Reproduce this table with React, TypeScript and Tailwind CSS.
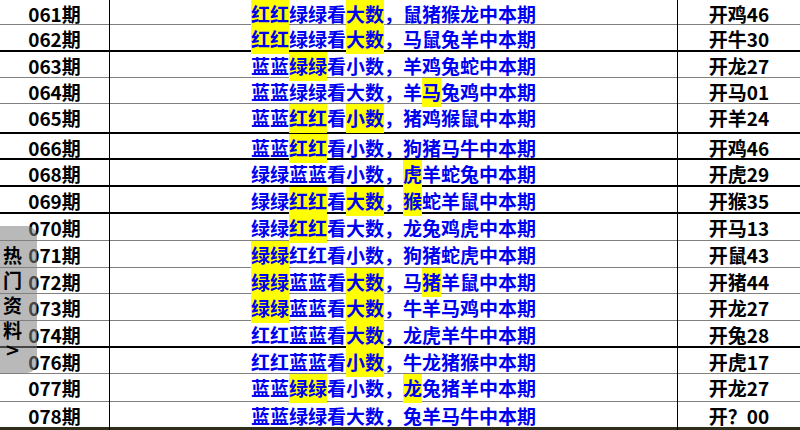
import { Fragment } from 'react'

type Row = { no: string; text: string; result: string; h: string; line: 'gray' | 'black' | 'none' }

// [..] marks the yellow highlighted parts
const ROWS: Row[] = [
  { no: '061期', text: '[红红]绿绿看[大数]，鼠猪猴龙中本期', result: '开鸡46', h: 'h-[25px]', line: 'gray' },
  { no: '062期', text: '[红红]绿绿看[大数]，马鼠兔羊中本期', result: '开牛30', h: 'h-[27px]', line: 'black' },
  { no: '063期', text: '蓝蓝[绿绿]看小数，羊鸡兔蛇中本期', result: '开龙27', h: 'h-[26px]', line: 'gray' },
  { no: '064期', text: '蓝蓝绿绿看大数，羊[马]兔鸡中本期', result: '开马01', h: 'h-[26px]', line: 'gray' },
  { no: '065期', text: '蓝蓝[红红]看[小数]，猪鸡猴鼠中本期', result: '开羊24', h: 'h-[30px]', line: 'black' },
  { no: '066期', text: '蓝蓝[红红]看小数，狗猪马牛中本期', result: '开鸡46', h: 'h-[26px]', line: 'black' },
  { no: '068期', text: '绿绿蓝蓝看小数，[虎]羊蛇兔中本期', result: '开虎29', h: 'h-[27px]', line: 'black' },
  { no: '069期', text: '绿绿[红红]看[大数]，[猴]蛇羊鼠中本期', result: '开猴35', h: 'h-[27px]', line: 'black' },
  { no: '070期', text: '绿绿[红红]看大数，龙兔鸡虎中本期', result: '开马13', h: 'h-[27px]', line: 'gray' },
  { no: '071期', text: '[绿绿]红红看小数，狗猪蛇虎中本期', result: '开鼠43', h: 'h-[27px]', line: 'gray' },
  { no: '072期', text: '[绿绿]蓝蓝看[大数]，马[猪]羊鼠中本期', result: '开猪44', h: 'h-[26px]', line: 'gray' },
  { no: '073期', text: '[绿绿]蓝蓝看[大数]，牛羊马鸡中本期', result: '开龙27', h: 'h-[27px]', line: 'gray' },
  { no: '074期', text: '红红蓝蓝看[大数]，龙虎羊牛中本期', result: '开兔28', h: 'h-[27px]', line: 'black' },
  { no: '076期', text: '红红蓝蓝看[小数]，牛龙猪猴中本期', result: '开虎17', h: 'h-[26px]', line: 'gray' },
  { no: '077期', text: '蓝蓝[绿绿]看小数，[龙]兔猪羊中本期', result: '开龙27', h: 'h-[28px]', line: 'gray' },
  { no: '078期', text: '蓝蓝绿绿看大数，兔羊马牛中本期', result: '开？00', h: 'h-[25px]', line: 'none' },
]

function segments(text: string) {
  return text.split(/(\[[^\]]+\])/).filter(Boolean).map((s) =>
    s.startsWith('[') ? { t: s.slice(1, -1), hl: true } : { t: s, hl: false }
  )
}

const lineClass = {
  gray: 'border-b border-[#808080]',
  black: 'border-b-2 border-black',
  none: '',
}

export default function App() {
  return (
    <div className="relative w-[800px] h-[430px] overflow-hidden bg-white font-bold text-[19px] font-['Noto_Sans_CJK_SC',sans-serif]">
      {ROWS.map((r) => (
        <div key={r.no} className={`grid grid-cols-[110px_1fr_123px] ${r.h} ${lineClass[r.line]}`}>
          <div className="flex items-center justify-center border-r border-black text-black">{r.no}</div>
          <div className="flex items-stretch justify-center text-[#0000f0]">
            {segments(r.text).map((s, i) => (
              <Fragment key={i}>
                <span className={`flex items-center whitespace-pre ${s.hl ? 'bg-[#ffff00]' : ''}`}>{s.t}</span>
              </Fragment>
            ))}
          </div>
          <div className="flex items-center justify-center border-l border-black text-black">{r.result}</div>
        </div>
      ))}
      <div className="h-[3px] bg-[#2e2e1a]" />

      <div className="absolute left-0 top-[226px] w-[37px] h-[147px] rounded-r-[10px] bg-[rgba(128,128,128,0.55)] pt-[16px] pl-[3px] text-black leading-[25px]">
        <div>热</div>
        <div>门</div>
        <div>资</div>
        <div>料</div>
        <div className="mt-[2px] pl-[2px] font-['DejaVu_Sans',sans-serif] text-[18px] leading-[12px]">&gt;</div>
      </div>
    </div>
  )
}
